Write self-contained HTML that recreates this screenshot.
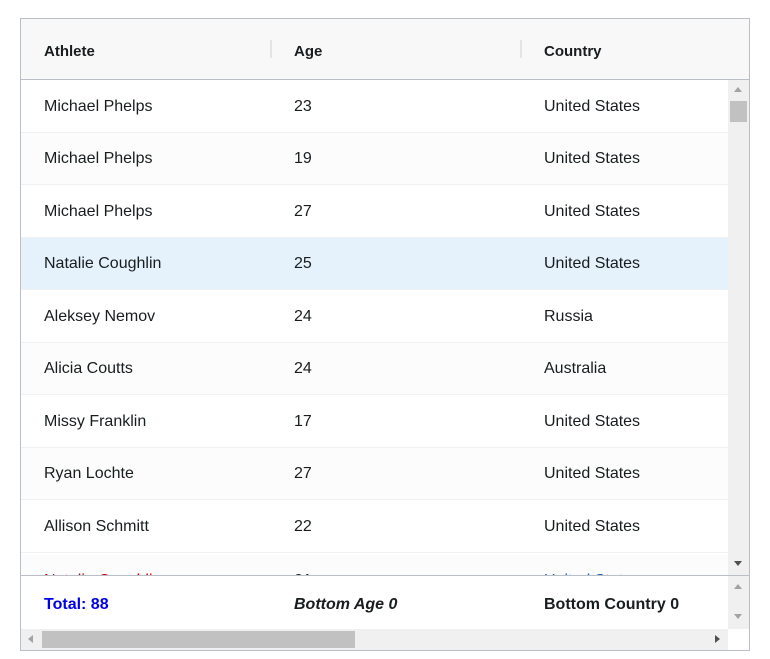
<!DOCTYPE html><html><head><style>
body{margin:0;width:770px;height:659px;background:#fff;font-family:"Liberation Sans",sans-serif;color:#181d1f;position:relative;overflow:hidden}
.g{position:absolute;left:20px;top:18px;width:728px;height:631px;border:1px solid #babfc7;overflow:hidden}
.hd{position:absolute;left:0;top:0;width:728px;height:60px;background:#f8f8f8;border-bottom:1px solid #babfc7;font-weight:bold;font-size:15px}
.c{position:absolute;top:0;height:100%;display:flex;align-items:center;padding-left:23px;box-sizing:border-box;white-space:nowrap}
.hd .c,.bt .c{padding-top:4px}
.r .c{padding-top:2px}
.sep{position:absolute;top:21px;width:2px;height:18px;background:#e2e4e8}
.body{position:absolute;left:0;top:61px;width:708px;height:495px;overflow:hidden}
.r{position:absolute;left:0;width:708px;height:52.5px;border-bottom:1px solid #f0f1f2;box-sizing:border-box;font-size:16px}
.vs{position:absolute;left:707px;top:61px;width:21px;height:495px;background:#f0f0f0}
.bt{position:absolute;left:0;top:556px;width:728px;height:53px;border-top:1px solid #babfc7;font-size:16px;font-weight:bold}
.hs{position:absolute;left:0;top:610px;width:707px;height:21px;background:#f0f0f0}
</style></head><body><div class="g">
<div class="hd"><div class="c" style="left:0">Athlete</div><div class="sep" style="left:249px"></div><div class="c" style="left:250px">Age</div><div class="sep" style="left:499px"></div><div class="c" style="left:500px">Country</div></div>
<div class="body">
<div class="r" style="top:0;background:#fff"><div class="c" style="left:0">Michael Phelps</div><div class="c" style="left:250px">23</div><div class="c" style="left:500px">United States</div></div>
<div class="r" style="top:52.5px;background:#fcfcfc"><div class="c" style="left:0">Michael Phelps</div><div class="c" style="left:250px">19</div><div class="c" style="left:500px">United States</div></div>
<div class="r" style="top:105px;background:#fff"><div class="c" style="left:0">Michael Phelps</div><div class="c" style="left:250px">27</div><div class="c" style="left:500px">United States</div></div>
<div class="r" style="top:157.5px;background:#e5f1fb"><div class="c" style="left:0">Natalie Coughlin</div><div class="c" style="left:250px">25</div><div class="c" style="left:500px">United States</div></div>
<div class="r" style="top:210px;background:#fff"><div class="c" style="left:0">Aleksey Nemov</div><div class="c" style="left:250px">24</div><div class="c" style="left:500px">Russia</div></div>
<div class="r" style="top:262.5px;background:#fcfcfc"><div class="c" style="left:0">Alicia Coutts</div><div class="c" style="left:250px">24</div><div class="c" style="left:500px">Australia</div></div>
<div class="r" style="top:315px;background:#fff"><div class="c" style="left:0">Missy Franklin</div><div class="c" style="left:250px">17</div><div class="c" style="left:500px">United States</div></div>
<div class="r" style="top:367.5px;background:#fcfcfc"><div class="c" style="left:0">Ryan Lochte</div><div class="c" style="left:250px">27</div><div class="c" style="left:500px">United States</div></div>
<div class="r" style="top:420px;background:#fff"><div class="c" style="left:0">Allison Schmitt</div><div class="c" style="left:250px">22</div><div class="c" style="left:500px">United States</div></div>
<div class="r" style="top:474.5px;background:#fcfcfc"><div class="c" style="left:0;color:#c00">Natalie Coughlin</div><div class="c" style="left:250px">21</div><div class="c" style="left:500px;color:#1a5fb4">United States</div></div>
</div>
<div class="vs"><div style="position:absolute;left:6px;top:7px;border:4px solid transparent;border-bottom:5px solid #a3a3a3;border-top:0"></div><div style="position:absolute;left:2px;top:21px;width:17px;height:21px;background:#c1c1c1"></div><div style="position:absolute;left:6px;top:481px;border:4px solid transparent;border-top:5px solid #505050;border-bottom:0"></div></div>
<div class="bt"><div class="c" style="left:0;color:#0000ee">Total: 88</div><div class="c" style="left:250px;font-style:italic">Bottom Age 0</div><div class="c" style="left:500px">Bottom Country 0</div>
<div style="position:absolute;left:707px;top:0;width:21px;height:53px;background:#f0f0f0"><div style="position:absolute;left:6px;top:8px;border:4px solid transparent;border-bottom:5px solid #a3a3a3;border-top:0"></div><div style="position:absolute;left:6px;top:38px;border:4px solid transparent;border-top:5px solid #a3a3a3;border-bottom:0"></div></div></div>
<div class="hs"><div style="position:absolute;left:7px;top:6px;border:4px solid transparent;border-right:5px solid #a3a3a3;border-left:0"></div><div style="position:absolute;left:21px;top:2px;width:313px;height:17px;background:#c1c1c1"></div><div style="position:absolute;left:694px;top:6px;border:4px solid transparent;border-left:5px solid #505050;border-right:0"></div></div>
</div></body></html>
